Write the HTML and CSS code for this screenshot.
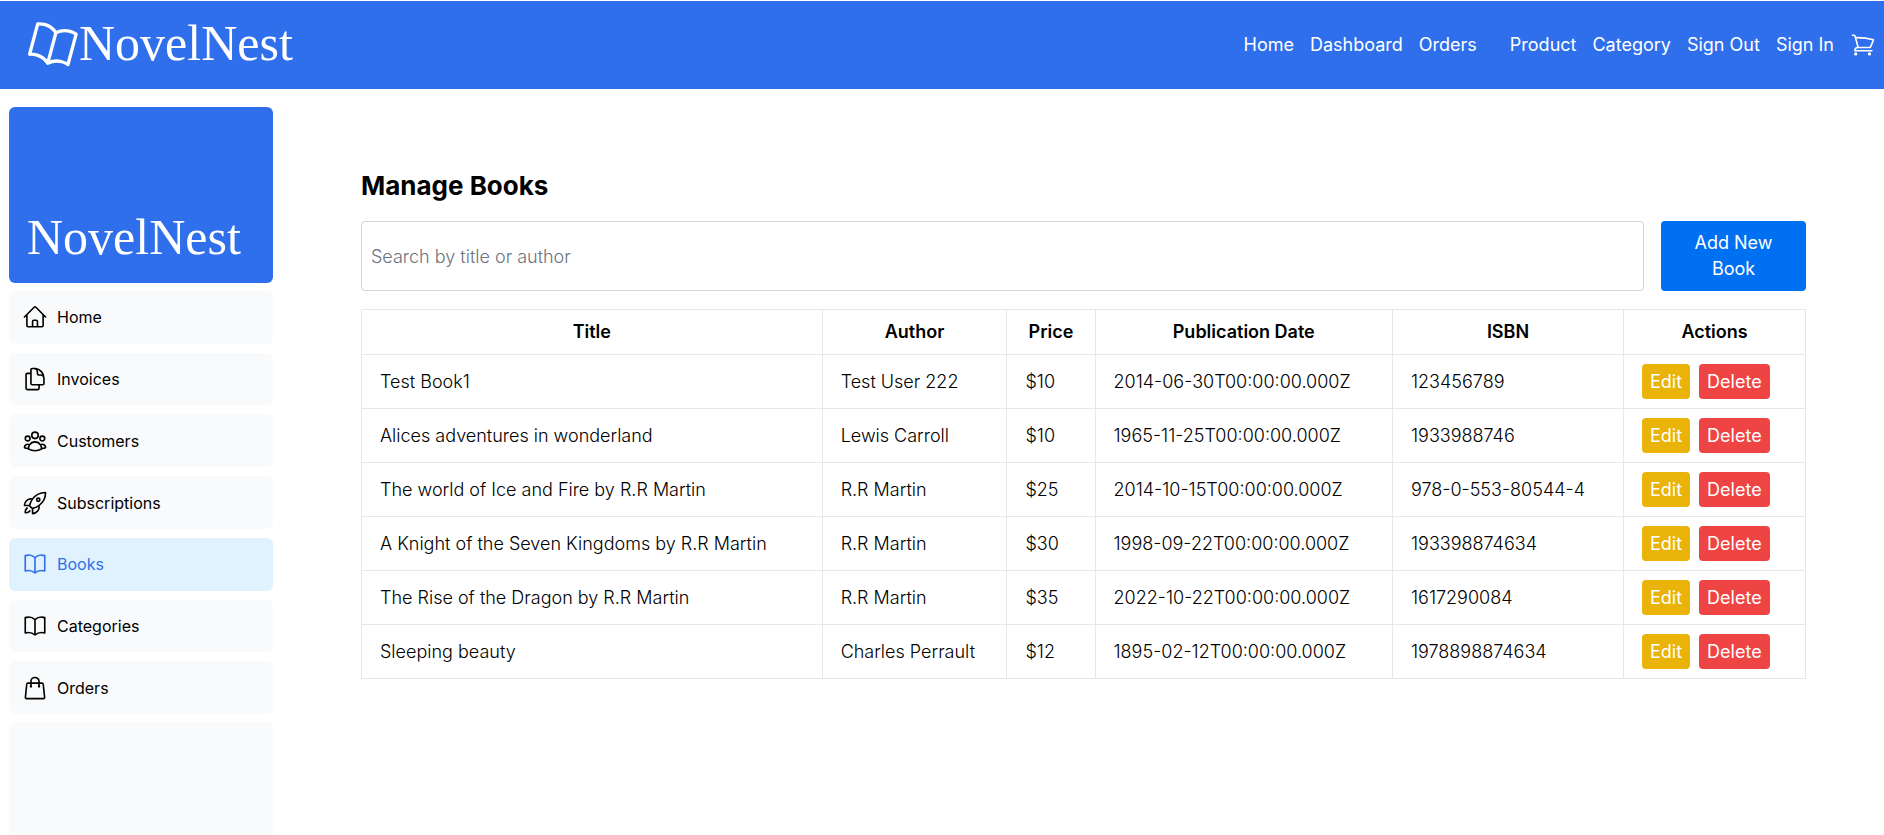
FILE: index.html
```html
<!DOCTYPE html>
<html lang="en">
<head>
<meta charset="utf-8">
<meta name="viewport" content="width=device-width, initial-scale=1">
<title>NovelNest</title>
<link rel="stylesheet" href="styles.css">
</head>
<body>
<svg class="sprite" aria-hidden="true">
  <symbol id="home" viewBox="0 0 24 24"><path d="M2.25 12l8.954-8.955c.44-.439 1.152-.439 1.591 0L21.75 12M4.5 9.75v10.125c0 .621.504 1.125 1.125 1.125H9.75v-4.875c0-.621.504-1.125 1.125-1.125h2.25c.621 0 1.125.504 1.125 1.125V21h4.125c.621 0 1.125-.504 1.125-1.125V9.75M8.25 21h8.25"/></symbol>
  <symbol id="documents" viewBox="0 0 24 24"><path d="M15.75 17.25v3.375c0 .621-.504 1.125-1.125 1.125h-9.75a1.125 1.125 0 01-1.125-1.125V7.875c0-.621.504-1.125 1.125-1.125H6.75a9.06 9.06 0 011.5.124m7.5 10.376h3.375c.621 0 1.125-.504 1.125-1.125V11.25c0-4.46-3.243-8.161-7.5-8.876a9.06 9.06 0 00-1.5-.124H9.375c-.621 0-1.125.504-1.125 1.125v3.5m7.5 10.375H9.375a1.125 1.125 0 01-1.125-1.125v-9.25m12 6.625v-1.875a3.375 3.375 0 00-3.375-3.375h-1.5a1.125 1.125 0 01-1.125-1.125v-1.5a3.375 3.375 0 00-3.375-3.375H9.75"/></symbol>
  <symbol id="group" viewBox="0 0 24 24"><path d="M18 18.72a9.094 9.094 0 003.741-.479 3 3 0 00-4.682-2.72m.94 3.198l.001.031c0 .225-.012.447-.037.666A11.944 11.944 0 0112 21c-2.17 0-4.207-.576-5.963-1.584A6.062 6.062 0 016 18.719m12 0a5.971 5.971 0 00-.941-3.197m0 0A5.995 5.995 0 0012 12.75a5.995 5.995 0 00-5.058 2.772m0 0a3 3 0 00-4.681 2.72 8.986 8.986 0 003.74.477m.94-3.197a5.971 5.971 0 00-.94 3.197M15 6.75a3 3 0 11-6 0 3 3 0 016 0zm6 3a2.25 2.25 0 11-4.5 0 2.25 2.25 0 014.5 0zm-13.5 0a2.25 2.25 0 11-4.5 0 2.25 2.25 0 014.5 0z"/></symbol>
  <symbol id="rocket" viewBox="0 0 24 24"><path d="M15.59 14.37a6 6 0 01-5.84 7.38v-4.8m5.84-2.58a14.98 14.98 0 006.16-12.12A14.98 14.98 0 009.631 8.41m5.96 5.96a14.926 14.926 0 01-5.841 2.58m-.119-8.54a6 6 0 00-7.381 5.84h4.8m2.581-5.84a14.927 14.927 0 00-2.58 5.84m2.699 2.7c-.103.021-.207.041-.311.06a15.09 15.09 0 01-2.448-2.448 14.9 14.9 0 01.06-.312m-2.24 2.39a4.493 4.493 0 00-1.757 4.306 4.493 4.493 0 004.306-1.758M16.5 9a1.5 1.5 0 11-3 0 1.5 1.5 0 013 0z"/></symbol>
  <symbol id="book" viewBox="0 0 24 24"><path d="M12 6.042A8.967 8.967 0 006 3.75c-1.052 0-2.062.18-3 .512v14.25A8.987 8.987 0 016 18c2.305 0 4.408.867 6 2.292m0-14.25a8.966 8.966 0 016-2.292c1.052 0 2.062.18 3 .512v14.25A8.987 8.987 0 0018 18a8.967 8.967 0 00-6 2.292m0-14.25v14.25"/></symbol>
  <symbol id="bag" viewBox="0 0 24 24"><path d="M15.75 10.5V6a3.75 3.75 0 10-7.5 0v4.5m11.356-1.993l1.263 12c.07.665-.45 1.243-1.119 1.243H4.25a1.125 1.125 0 01-1.12-1.243l1.264-12A1.125 1.125 0 015.513 7.5h12.974c.576 0 1.059.435 1.119 1.007zM8.625 10.5a.375.375 0 11-.75 0 .375.375 0 01.75 0zm7.5 0a.375.375 0 11-.75 0 .375.375 0 01.75 0z"/></symbol>
  <symbol id="cart" viewBox="0 0 24 24"><path d="M2.25 3h1.386c.51 0 .955.343 1.087.835l.383 1.437M7.5 14.25a3 3 0 00-3 3h15.75m-12.75-3h11.218c1.121-2.3 2.1-4.684 2.924-7.138a60.114 60.114 0 00-16.536-1.84M7.5 14.25L5.106 5.272M6 20.25a.75.75 0 11-1.5 0 .75.75 0 011.5 0zm12.75 0a.75.75 0 11-1.5 0 .75.75 0 011.5 0z"/></symbol>
</svg>

<header class="topbar">
  <a class="brand" href="#">
    <svg class="icon brand-icon" aria-hidden="true"><use href="#book"/></svg>
    <span class="wordmark">NovelNest</span>
  </a>
  <nav class="topnav" aria-label="Main">
    <div class="nav-group">
      <a href="#">Home</a>
      <a href="#">Dashboard</a>
      <a href="#">Orders</a>
    </div>
    <div class="nav-group">
      <a href="#">Product</a>
      <a href="#">Category</a>
      <a href="#">Sign Out</a>
      <a href="#">Sign In</a>
      <a class="cart" href="#" aria-label="Cart"><svg class="icon" aria-hidden="true"><use href="#cart"/></svg></a>
    </div>
  </nav>
</header>

<div class="layout">
  <aside class="sidebar">
    <a class="side-brand" href="#"><span class="wordmark">NovelNest</span></a>
    <nav class="side-nav" aria-label="Dashboard">
      <a class="side-link" href="#"><svg class="icon" aria-hidden="true"><use href="#home"/></svg>Home</a>
      <a class="side-link" href="#"><svg class="icon" aria-hidden="true"><use href="#documents"/></svg>Invoices</a>
      <a class="side-link" href="#"><svg class="icon" aria-hidden="true"><use href="#group"/></svg>Customers</a>
      <a class="side-link" href="#"><svg class="icon" aria-hidden="true"><use href="#rocket"/></svg>Subscriptions</a>
      <a class="side-link active" href="#" aria-current="page"><svg class="icon" aria-hidden="true"><use href="#book"/></svg>Books</a>
      <a class="side-link" href="#"><svg class="icon" aria-hidden="true"><use href="#book"/></svg>Categories</a>
      <a class="side-link" href="#"><svg class="icon" aria-hidden="true"><use href="#bag"/></svg>Orders</a>
    </nav>
    <div class="side-fill"></div>
  </aside>

  <main class="content">
    <h1>Manage Books</h1>
    <div class="toolbar">
      <input class="search" type="text" placeholder="Search by title or author" aria-label="Search by title or author">
      <button class="add" type="button">Add New Book</button>
    </div>
    <table class="books">
      <colgroup>
        <col class="col-title"><col class="col-author"><col class="col-price"><col class="col-date"><col class="col-isbn"><col class="col-actions">
      </colgroup>
      <thead>
        <tr><th>Title</th><th>Author</th><th>Price</th><th>Publication Date</th><th>ISBN</th><th>Actions</th></tr>
      </thead>
      <tbody>
        <tr><td>Test Book1</td><td>Test User 222</td><td>$10</td><td>2014-06-30T00:00:00.000Z</td><td>123456789</td><td><div class="actions"><button class="edit" type="button">Edit</button><button class="delete" type="button">Delete</button></div></td></tr>
        <tr><td>Alices adventures in wonderland</td><td>Lewis Carroll</td><td>$10</td><td>1965-11-25T00:00:00.000Z</td><td>1933988746</td><td><div class="actions"><button class="edit" type="button">Edit</button><button class="delete" type="button">Delete</button></div></td></tr>
        <tr><td>The world of Ice and Fire by R.R Martin</td><td>R.R Martin</td><td>$25</td><td>2014-10-15T00:00:00.000Z</td><td>978-0-553-80544-4</td><td><div class="actions"><button class="edit" type="button">Edit</button><button class="delete" type="button">Delete</button></div></td></tr>
        <tr><td>A Knight of the Seven Kingdoms by R.R Martin</td><td>R.R Martin</td><td>$30</td><td>1998-09-22T00:00:00.000Z</td><td>193398874634</td><td><div class="actions"><button class="edit" type="button">Edit</button><button class="delete" type="button">Delete</button></div></td></tr>
        <tr><td>The Rise of the Dragon by R.R Martin</td><td>R.R Martin</td><td>$35</td><td>2022-10-22T00:00:00.000Z</td><td>1617290084</td><td><div class="actions"><button class="edit" type="button">Edit</button><button class="delete" type="button">Delete</button></div></td></tr>
        <tr><td>Sleeping beauty</td><td>Charles Perrault</td><td>$12</td><td>1895-02-12T00:00:00.000Z</td><td>1978898874634</td><td><div class="actions"><button class="edit" type="button">Edit</button><button class="delete" type="button">Delete</button></div></td></tr>
      </tbody>
    </table>
  </main>
</div>
</body>
</html>
```
FILE: styles.css
```css
*, *::before, *::after { box-sizing: border-box; }

body {
  margin: 0;
  padding-top: 1px;
  min-height: 100vh;
  display: flex;
  flex-direction: column;
  background: #fff;
  color: #000;
  font: 300 18px/26px Inter, "Liberation Sans", sans-serif;
}

a { color: inherit; text-decoration: none; }
button, input { font: inherit; }
button { font-weight: 400; }

.sprite { display: none; }

.icon {
  width: 26px;
  height: 26px;
  flex: none;
  fill: none;
  stroke: currentColor;
  stroke-width: 1.5;
  stroke-linecap: round;
  stroke-linejoin: round;
}

.wordmark {
  font: 400 50px/56px "Liberation Serif", serif;
}

.topbar {
  display: flex;
  align-items: center;
  justify-content: space-between;
  height: 88px;
  padding: 0 8px 0 26px;
  background: #2f6feb;
  color: #fff;
}

.brand { display: flex; align-items: center; }
.brand .wordmark { padding-bottom: 4px; }
.brand-icon { width: 53px; height: 53px; transform: rotate(15deg); }

.topnav { display: flex; align-items: center; gap: 33px; font-weight: 400; }
.nav-group { display: flex; align-items: center; gap: 16px; }
.cart { display: flex; }

.layout { display: flex; flex: 1; }

.sidebar {
  display: flex;
  flex-direction: column;
  gap: 8px;
  width: 282px;
  flex: none;
  padding: 18px 9px 0;
}

.side-brand {
  display: flex;
  align-items: flex-end;
  height: 176px;
  padding: 18px;
  border-radius: 6px;
  background: #2f6feb;
  color: #fff;
}

.side-nav {
  display: flex;
  flex-direction: column;
  gap: 9px;
  min-height: 423px;
}

.side-link {
  display: flex;
  flex: 1;
  align-items: center;
  gap: 9px;
  padding: 13px;
  border-radius: 6px;
  background: #f9fafb;
  font-size: 16px;
  font-weight: 400;
}

.side-link.active { background: #e0f2fe; color: #2f6feb; }

.side-fill { flex: 1; border-radius: 6px 6px 0 0; background: #f9fafb; }

.content { flex: 1; min-width: 0; padding: 79px 78px 0 79px; }

h1 { margin: 0 0 18px; font-size: 26px; line-height: 35px; font-weight: 700; }

.toolbar { display: flex; gap: 17px; margin-bottom: 18px; }

.search {
  flex: 1;
  min-width: 0;
  height: 70px;
  padding: 0 9px;
  border: 1px solid #d1d5db;
  border-radius: 4px;
  background: #fff;
}

.search::placeholder { color: #6b7280; opacity: 1; }

.add {
  width: 145px;
  padding: 9px 18px;
  border: 0;
  border-radius: 4px;
  background: #0070f3;
  color: #fff;
}

.books { width: 100%; border-collapse: collapse; table-layout: fixed; }
.col-title { width: 31.9%; }
.col-author { width: 12.8%; }
.col-price { width: 6.1%; }
.col-date { width: 20.6%; }
.col-isbn { width: 16%; }
.col-actions { width: 12.6%; }

.books th, .books td { border: 1px solid #e5e7eb; }
.books th { padding: 9px 4px; font-weight: 600; text-align: center; }
.books td { padding: 9px 18px; }

.actions { display: flex; gap: 9px; }

.edit, .delete {
  height: 35px;
  padding: 0 8px;
  border: 0;
  border-radius: 4px;
  color: #fff;
}

.edit { background: #eab308; }
.delete { background: #ef4444; }
```
